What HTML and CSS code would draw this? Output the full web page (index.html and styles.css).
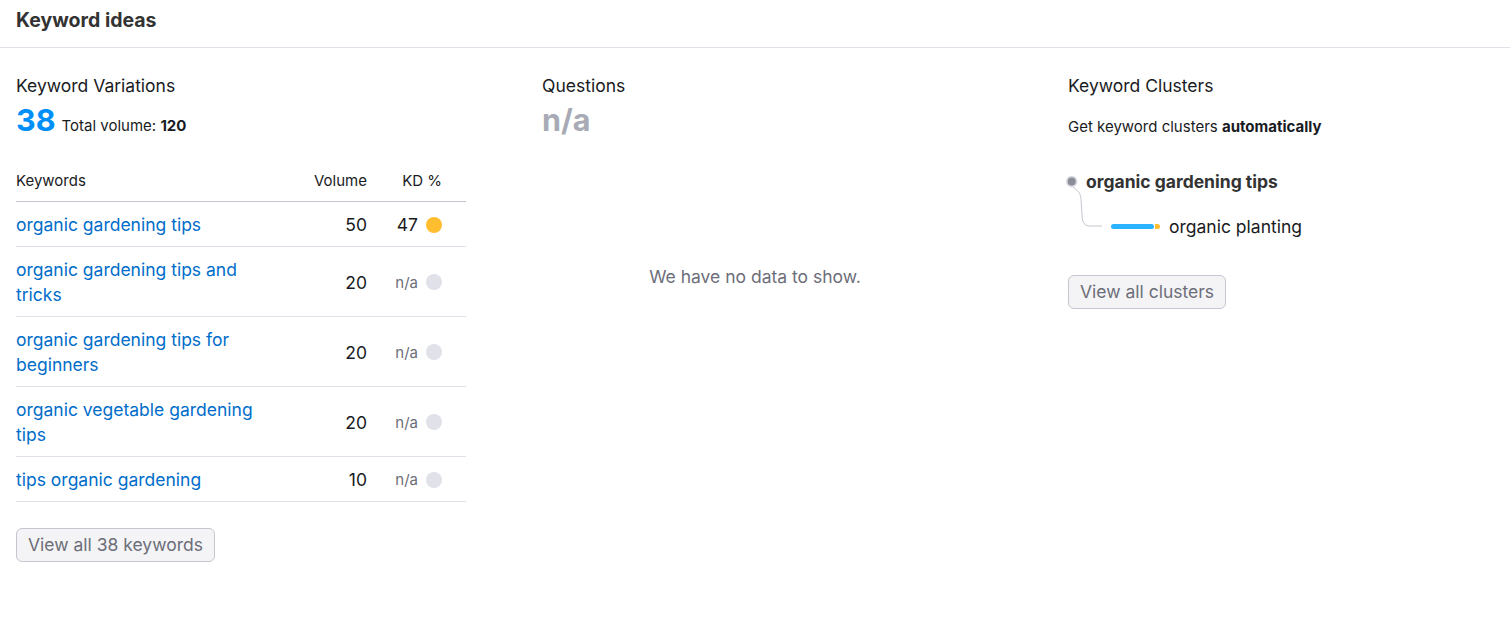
FILE: index.html
```html
<!DOCTYPE html>
<html>
<head>
<meta charset="utf-8">
<link rel="stylesheet" href="styles.css">
</head>
<body>
<div class="widget">
  <div class="header"><h2 class="title">Keyword ideas</h2></div>
  <div class="columns">
    <section class="col col-variations">
      <div class="col-title">Keyword Variations</div>
      <div class="stat">
        <span class="stat-num">38</span>
        <span class="stat-sub">Total volume: <b>120</b></span>
      </div>
      <div class="table">
        <div class="row row-head">
          <div class="c-kw">Keywords</div>
          <div class="c-vol">Volume</div>
          <div class="c-kd">KD %</div>
        </div>
        <div class="row">
          <div class="c-kw"><a class="kw">organic gardening tips</a></div>
          <div class="c-vol">50</div>
          <div class="c-kd"><span class="kd-val">47</span><span class="dot dot-yellow"></span></div>
        </div>
        <div class="row">
          <div class="c-kw"><a class="kw">organic gardening tips and tricks</a></div>
          <div class="c-vol">20</div>
          <div class="c-kd"><span class="kd-na">n/a</span><span class="dot"></span></div>
        </div>
        <div class="row">
          <div class="c-kw"><a class="kw">organic gardening tips for beginners</a></div>
          <div class="c-vol">20</div>
          <div class="c-kd"><span class="kd-na">n/a</span><span class="dot"></span></div>
        </div>
        <div class="row">
          <div class="c-kw"><a class="kw">organic vegetable gardening tips</a></div>
          <div class="c-vol">20</div>
          <div class="c-kd"><span class="kd-na">n/a</span><span class="dot"></span></div>
        </div>
        <div class="row">
          <div class="c-kw"><a class="kw">tips organic gardening</a></div>
          <div class="c-vol">10</div>
          <div class="c-kd"><span class="kd-na">n/a</span><span class="dot"></span></div>
        </div>
      </div>
      <button class="btn btn-keywords">View all 38 keywords</button>
    </section>
    <section class="col col-questions">
      <div class="col-title">Questions</div>
      <div class="stat"><span class="stat-num stat-na">n/a</span></div>
      <div class="empty">We have no data to show.</div>
    </section>
    <section class="col col-clusters">
      <div class="col-title">Keyword Clusters</div>
      <div class="cluster-sub">Get keyword clusters <b>automatically</b></div>
      <div class="tree">
        <svg class="tree-svg" width="104" height="64" viewBox="0 0 104 64">
          <path d="M8 15 C 10 18, 17 20, 17 28 L 18 44 C 18 52, 21 55, 26 55 L 38 55" fill="none" stroke="#c4c7cf" stroke-width="1"/>
          <circle cx="7.7" cy="10.5" r="5.7" fill="#d7d9e0"/>
          <circle cx="7.7" cy="10.5" r="4" fill="#8b8e99"/>
          <rect x="47" y="53" width="43" height="5" rx="2.5" fill="#2bb3ff"/>
          <path d="M91 53 H93.5 A2.5 2.5 0 0 1 93.5 58 H91 Z" fill="#ffbe30"/>
        </svg>
        <div class="tree-root">organic gardening tips</div>
        <div class="tree-child">organic planting</div>
      </div>
      <button class="btn btn-clusters">View all clusters</button>
    </section>
  </div>
</div>
</body>
</html>
```
FILE: styles.css
```css
* { box-sizing: border-box; }
html, body { margin: 0; padding: 0; background: #fff; }
body {
  font-family: Inter, "Noto Sans", "Liberation Sans", sans-serif;
  color: #333;
}
.header {
  height: 48px;
  border-bottom: 1px solid #e0e1e9;
  padding: 7px 16px 0;
}
.title {
  margin: 0;
  font-size: 19.5px;
  font-weight: 700;
  line-height: 26px;
  color: #333;
}
.columns {
  display: grid;
  grid-template-columns: 526px 526px 1fr;
  padding: 25px 16px 0;
}
.col-title {
  font-size: 17.5px;
  line-height: 26px;
  color: #191b23;
}
.stat {
  display: flex;
  align-items: baseline;
  gap: 6px;
  height: 36px;
  margin-top: 3px;
}
.stat-num {
  font-size: 30.5px;
  font-weight: 700;
  line-height: 36px;
  color: #008ff8;
}
.stat-na { color: #a8abb6; }
.stat-sub { font-size: 15px; color: #191b23; }
.stat-sub b { font-weight: 700; }

.table { width: 450px; margin-top: 33px; }
.row {
  display: grid;
  grid-template-columns: 261px 90px 75px;
  padding-right: 24px;
  align-items: center;
  border-bottom: 1px solid #e0e1e9;
  padding-top: 10px;
  padding-bottom: 9px;
  font-size: 17.5px;
  line-height: 25px;
}
.row-head {
  font-size: 15px;
  line-height: 20px;
  padding-top: 0;
  padding-bottom: 10px;
  border-bottom-color: #c4c7cf;
  color: #191b23;
}
.c-kw { padding-right: 8px; }
.c-vol { text-align: right; color: #191b23; }
.c-kd {
  display: flex;
  justify-content: flex-end;
  align-items: center;
  gap: 8px;
  color: #191b23;
}
.row-head .c-kd { gap: 0; }
.kw { color: #006dca; text-decoration: none; }
.kd-na { font-size: 15px; color: #6c6e79; }
.dot {
  width: 16px;
  height: 16px;
  border-radius: 50%;
  background: #e0e1e9;
  flex: none;
}
.dot-yellow { background: #ffbe30; }

.btn {
  display: block;
  font-family: inherit;
  font-size: 17.5px;
  line-height: 24px;
  color: #6c6e79;
  background: #f4f4f6;
  border: 1px solid #c4c7cf;
  border-radius: 6px;
  padding: 4px 11px;
  height: 34px;
}
.btn-keywords { margin-top: 26px; }

.col-questions { width: 426px; }
.empty {
  margin-top: 127px;
  text-align: center;
  font-size: 17.5px;
  line-height: 24px;
  color: #6c6e79;
}

.cluster-sub {
  font-size: 15px;
  line-height: 20px;
  color: #191b23;
  margin-top: 18px;
}
.tree {
  position: relative;
  margin-top: 34px;
  padding-left: 18px;
}
.tree-svg {
  position: absolute;
  left: -4px;
  top: 0;
}
.tree-root {
  font-size: 17.5px;
  font-weight: 700;
  line-height: 22px;
  color: #333;
}
.tree-child {
  font-size: 17.5px;
  line-height: 22px;
  color: #191b23;
  padding-left: 83px;
  margin-top: 23px;
}
.btn-clusters { margin-top: 37px; }
```
